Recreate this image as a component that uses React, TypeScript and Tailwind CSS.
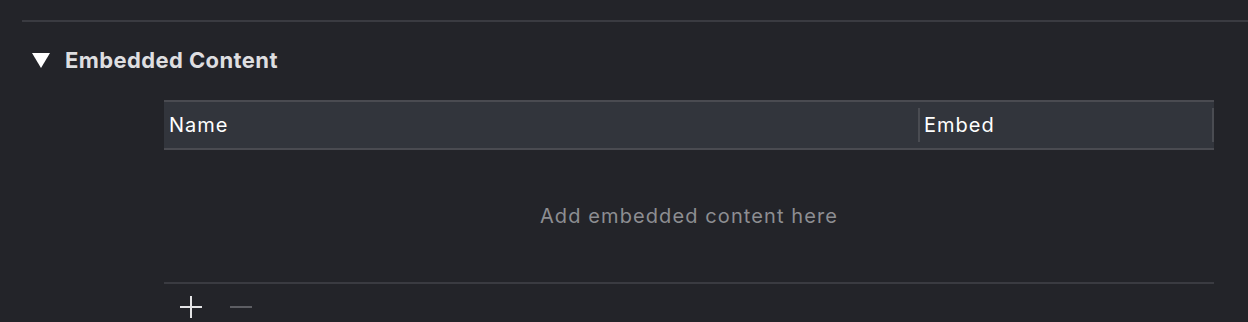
import React from "react";

function App() {
  return (
    <div
      className="w-[1248px] h-[322px] bg-[#232429] overflow-hidden"
      style={{ fontFamily: 'Inter, "Liberation Sans", Arial, sans-serif' }}
    >
      <div className="pt-[20px] pl-[22px]">
        <div className="h-[2px] bg-[#3a3b41]"></div>
      </div>

      <div className="flex items-center h-[36px] mt-[20px] pl-[32px]">
        <svg width="18" height="15" viewBox="0 0 18 15">
          <polygon points="0,0 18,0 9,15" fill="#ffffff" />
        </svg>
        <span className="ml-[15px] text-[22px] font-bold tracking-[0.4px] text-[#dedee0] leading-none">
          Embedded Content
        </span>
      </div>

      <div className="ml-[164px] w-[1050px] mt-[22px]">
        <div className="border-y-2 border-[#4a4b51] bg-[#32353c] h-[50px] flex items-center">
          <div className="w-[756px] h-[34px] flex items-center pl-[5px] border-r-2 border-[#4a4c52]">
            <span className="text-[20px] tracking-[1px] text-white leading-none">Name</span>
          </div>
          <div className="flex-1 h-[34px] flex items-center pl-[4px] border-r-2 border-[#4a4c52]">
            <span className="text-[20px] tracking-[1px] text-white leading-none">Embed</span>
          </div>
        </div>
        <div className="h-[132px] flex items-center justify-center">
          <span className="text-[20px] tracking-[1.1px] text-[#8d8e92] leading-none">
            Add embedded content here
          </span>
        </div>
        <div className="h-[2px] bg-[#3a3b41]"></div>
        <div className="flex items-center gap-[28px] pl-[16px] pt-[12px]">
          <svg width="22" height="22" viewBox="0 0 22 22">
            <rect x="10" y="0" width="2" height="22" fill="#e4e4e6" />
            <rect x="0" y="10" width="22" height="2" fill="#e4e4e6" />
          </svg>
          <svg width="22" height="22" viewBox="0 0 22 22">
            <rect x="0" y="10" width="22" height="2" fill="#5d5e63" />
          </svg>
        </div>
      </div>
    </div>
  );
}

export default App;
